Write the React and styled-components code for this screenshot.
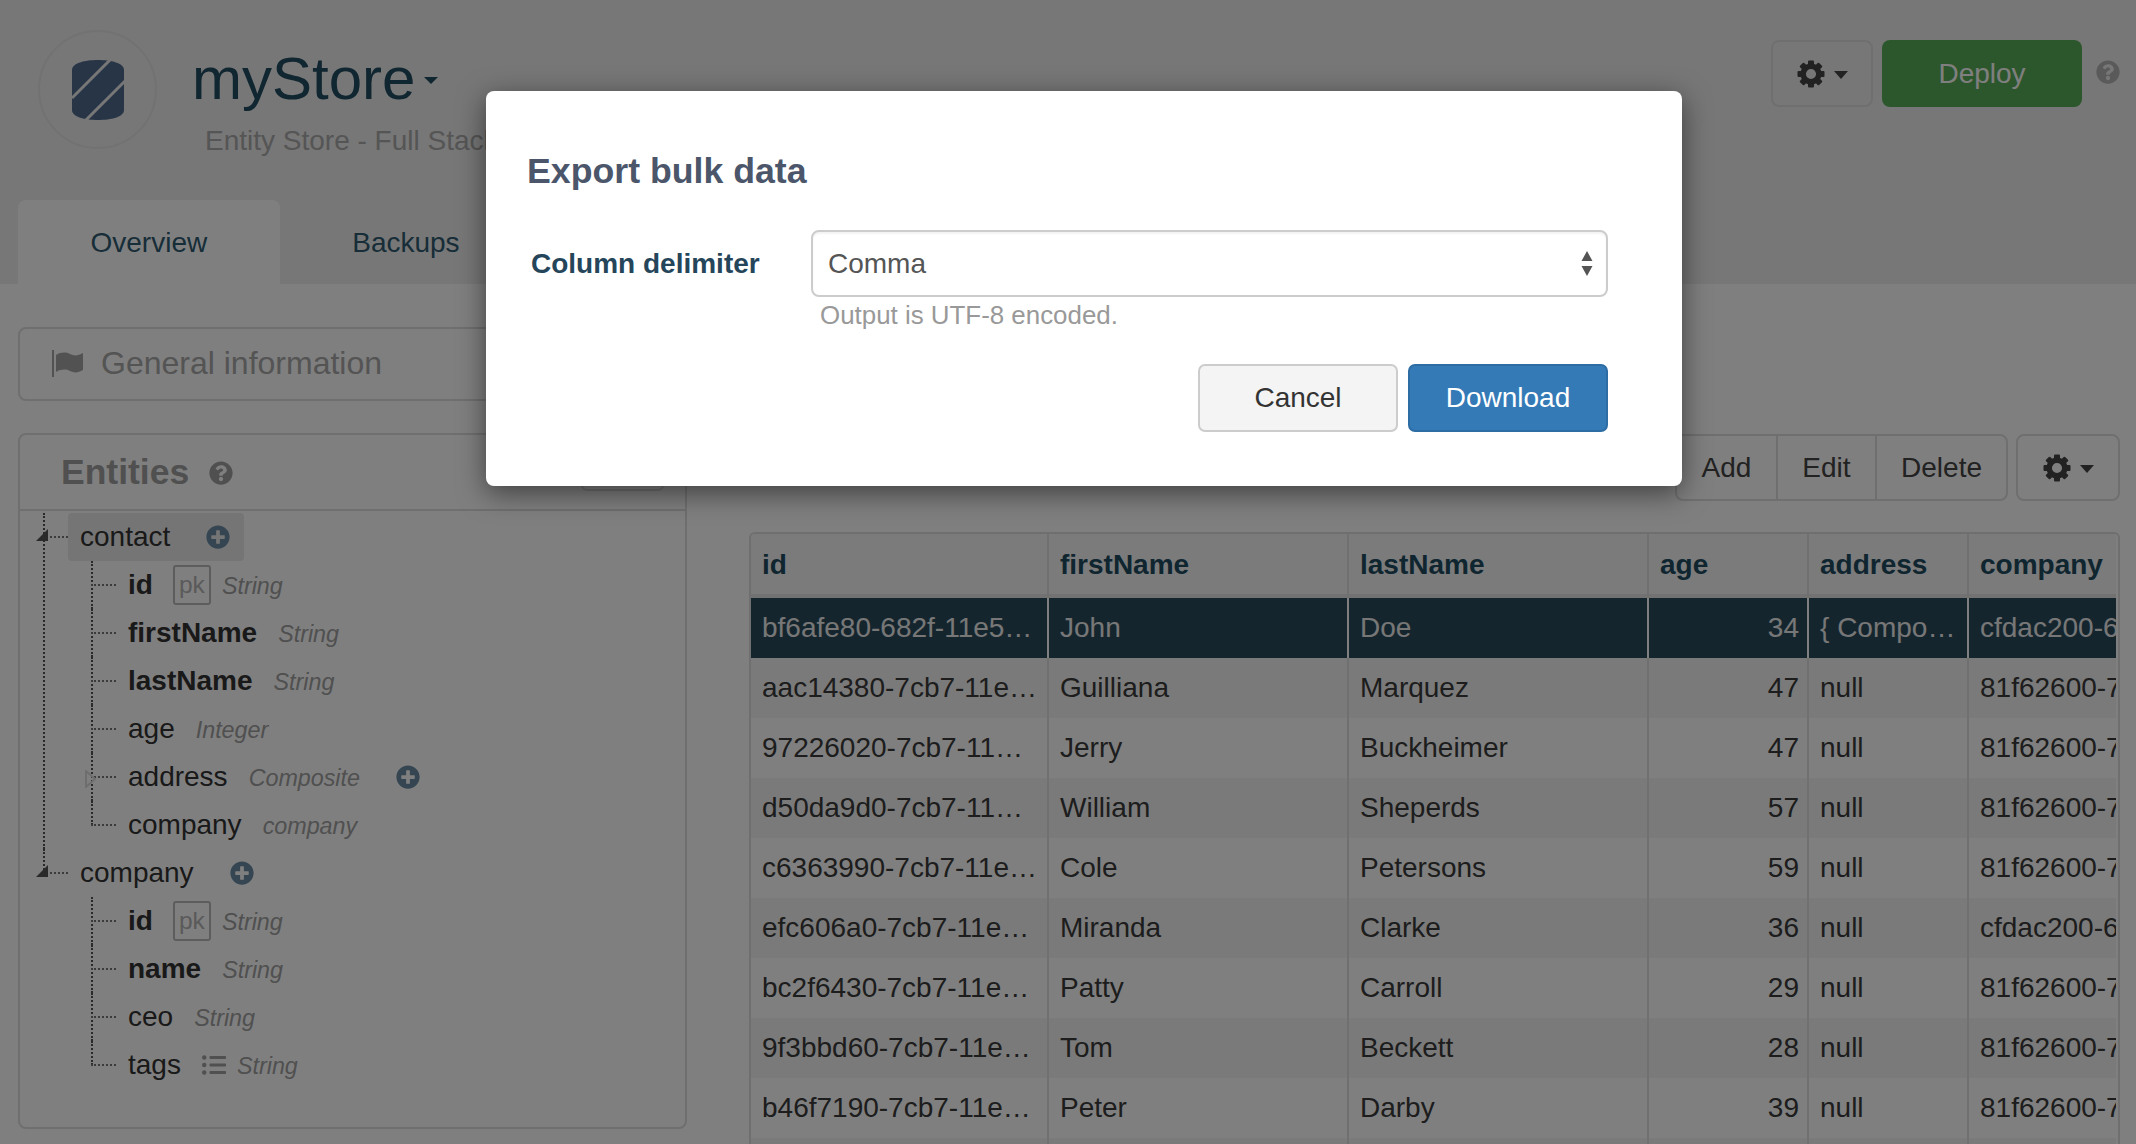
import React from "react";
import styled, { createGlobalStyle } from "styled-components";
import { FaListUl, FaPlusCircle, FaQuestionCircle } from "react-icons/fa";

const Global = createGlobalStyle`
  html, body { margin: 0; padding: 0; background: #fff; }
  body { font-family: "Liberation Sans", Arial, sans-serif; color: #333; }
  * { box-sizing: border-box; }
`;

const Page = styled.div`
  position: relative;
  width: 2136px;
  height: 1144px;
  overflow: hidden;
  background: #fff;
`;
const Header = styled.header`
  height: 284px;
  background: #eee;
  padding: 0 16px 0 18px;
  display: flex;
  flex-direction: column;
`;
const TopRow = styled.div`
  height: 200px;
  display: flex;
  align-items: flex-start;
`;
const LogoCircle = styled.div`
  width: 119px;
  height: 119px;
  margin: 30px 0 0 20px;
  border: 2px solid #e4e4e4;
  border-radius: 50%;
  display: flex;
  align-items: center;
  justify-content: center;
  flex: none;
`;
const TitleBlock = styled.div`
  margin: 49px 0 0 35px;
`;
const TitleLine = styled.div`
  display: flex;
  align-items: center;
`;
const Title = styled.h1`
  margin: 0;
  font-size: 60px;
  line-height: 59px;
  font-weight: 400;
  color: #204c60;
`;
const TitleCaret = styled.span`
  width: 0;
  height: 0;
  margin: 4px 0 0 9px;
  border-left: 7px solid transparent;
  border-right: 7px solid transparent;
  border-top: 7px solid #204c60;
`;
const Subtitle = styled.div`
  margin: 17px 0 0 13px;
  font-size: 28px;
  line-height: 32px;
  color: #aaa;
  white-space: nowrap;
`;
const HeaderActions = styled.div`
  margin: 40px 0 0 auto;
  display: flex;
  align-items: flex-start;
`;
const GearButton = styled.button`
  width: ${(p) => p.$width}px;
  height: 67px;
  border: 2px solid #dedede;
  border-radius: 8px;
  background: transparent;
  display: flex;
  align-items: center;
  justify-content: center;
  gap: 9px;
  padding: 0;
`;
const Caret = styled.span`
  width: 0;
  height: 0;
  margin-top: 2px;
  border-left: 7.5px solid transparent;
  border-right: 7.5px solid transparent;
  border-top: 8px solid #444;
`;
const DeployButton = styled.button`
  width: 200px;
  height: 67px;
  margin-left: 9px;
  border: 0;
  border-radius: 8px;
  background: #58ad58;
  color: #fff;
  font: 400 28px "Liberation Sans", Arial, sans-serif;
`;
const HeaderHelp = styled.span`
  margin: 20px 0 0 14px;
  color: #b4b4b4;
  font-size: 24px;
  line-height: 24px;
  display: flex;
`;
const Tabs = styled.nav`
  display: flex;
  height: 84px;
`;
const Tab = styled.a`
  padding: 2px 72.5px 0;
  display: flex;
  align-items: center;
  font-size: 28px;
  color: #2f5b70;
  background: ${(p) => (p.$active ? "#fff" : "transparent")};
  border-radius: 8px 8px 0 0;
`;

const Main = styled.main`
  display: flex;
  padding-left: 18px;
`;
const LeftColumn = styled.div`
  width: 669px;
  padding-top: 43px;
  flex: none;
`;
const GeneralPanel = styled.div`
  height: 74px;
  border: 2px solid #dedede;
  border-radius: 8px;
  padding: 0 0 2px 31px;
  display: flex;
  align-items: center;
  font-size: 32px;
  color: #a8a8a8;
`;
const Flag = styled.svg`
  margin-right: 18px;
  flex: none;
`;
const EntitiesPanel = styled.section`
  margin-top: 32px;
  height: 696px;
  border: 2px solid #dedede;
  border-radius: 8px;
`;
const EntitiesHeader = styled.div`
  height: 76px;
  border-bottom: 2px solid #dedede;
  display: flex;
  align-items: flex-start;
  padding: 0 21px 0 41px;
`;
const EntitiesTitle = styled.h2`
  margin: 17px 0 0;
  font-size: 35.5px;
  line-height: 40px;
  font-weight: 700;
  color: #a0a0a0;
`;
const EntitiesHelp = styled.span`
  margin: 26px 0 0 20px;
  color: #a0a0a0;
  font-size: 24px;
  line-height: 24px;
  display: flex;
`;
const NewButton = styled.button`
  margin: 8px 0 0 auto;
  width: 83px;
  height: 48px;
  border: 2px solid #dedede;
  border-radius: 6px;
  background: transparent;
`;
const TreeRoot = styled.ul`
  list-style: none;
  margin: 0;
  padding: 2px 0 0;
`;
const TreeList = styled.ul`
  list-style: none;
  margin: 0;
  padding: 0;
`;
const TreeNode = styled.li`
  position: relative;
  margin-left: ${(p) => p.$indent}px;
  padding-left: 25px;
  &::before {
    content: "";
    position: absolute;
    left: 0;
    top: 0;
    height: ${(p) => (p.$last ? "24px" : "100%")};
    border-left: 2px dotted #555;
  }
`;
const Row = styled.div`
  position: relative;
  height: 48px;
  display: flex;
  align-items: center;
  font-size: 28px;
  &::before {
    content: "";
    position: absolute;
    left: -25px;
    top: 23px;
    width: 25px;
    border-top: 2px dotted #777;
  }
`;
const Label = styled.div`
  display: inline-flex;
  align-items: center;
  height: 48px;
  padding: 0 14px 0 12px;
  border-radius: 4px;
  background: ${(p) => (p.$selected ? "#eaeaea" : "transparent")};
`;
const Name = styled.span`
  color: #333;
  font-weight: ${(p) => (p.$bold ? 700 : 400)};
`;
const Pk = styled.span`
  width: 38px;
  height: 40px;
  margin-left: 20px;
  border: 2px solid #bbb;
  border-radius: 3px;
  color: #b4b4b4;
  font-size: 24.5px;
  display: flex;
  align-items: center;
  justify-content: center;
`;
const Type = styled.span`
  margin: 3px 0 0 ${(p) => (p.$tight ? 11 : 21)}px;
  font-size: 23.3px;
  font-style: italic;
  color: #a0a0a0;
`;
const PlusIcon = styled(FaPlusCircle)`
  margin-left: 36px;
  font-size: 24px;
  color: #6a8ca4;
`;
const ListIcon = styled(FaListUl)`
  margin-left: 21px;
  font-size: 24px;
  color: #a0a0a0;
`;
const Toggle = styled.svg`
  position: absolute;
  left: ${(p) => p.$left}px;
  top: ${(p) => p.$top}px;
`;

const RightColumn = styled.div`
  margin-left: 62px;
  width: 1371px;
  padding-top: 150px;
  flex: none;
`;
const Toolbar = styled.div`
  display: flex;
  justify-content: flex-end;
  gap: 8px;
  height: 67px;
`;
const ButtonGroup = styled.div`
  display: flex;
  border: 2px solid #dedede;
  border-radius: 8px;
`;
const GroupButton = styled.button`
  padding: 0 ${(p) => p.$pad}px;
  border: 0;
  border-left: ${(p) => (p.$first ? "0" : "2px solid #dedede")};
  background: transparent;
  color: #444;
  font: 400 28px "Liberation Sans", Arial, sans-serif;
`;
const TableFrame = styled.div`
  margin-top: 31px;
  border: 2px solid #dedede;
  border-bottom: 0;
  padding-right: 2px;
  border-radius: 6px 6px 0 0;
  overflow: hidden;
  height: 700px;
`;
const TableClip = styled.div`
  overflow: hidden;
`;
const Table = styled.table`
  border-collapse: separate;
  border-spacing: 0;
  table-layout: fixed;
  width: 1540px;
  font-size: 28px;
`;
const Th = styled.th`
  height: 64px;
  padding: 3px 9px 1px 11px;
  text-align: left;
  font-weight: 700;
  background: #f6f6f6;
  color: #1f4c60;
  border-right: 2px solid #e0e0e0;
  border-bottom: 4px solid #e4e4e4;
`;
const Td = styled.td`
  height: 60px;
  padding: 0 ${(p) => (p.$num ? 8 : 9)}px 0 11px;
  text-align: ${(p) => (p.$num ? "right" : "left")};
  white-space: nowrap;
  overflow: hidden;
  text-overflow: ${(p) => (p.$clip ? "clip" : "ellipsis")};
  border-right: 2px solid ${(p) => (p.$selected ? "#fff" : "#e0e0e0")};
  color: ${(p) => (p.$selected ? "#eee" : "#3a3a3a")};
  background: ${(p) => (p.$selected ? "#294a5c" : p.$striped ? "#f5f5f5" : "#fff")};
`;

const Backdrop = styled.div`
  position: absolute;
  inset: 0;
  background: rgba(0, 0, 0, 0.5);
`;
const Modal = styled.div`
  position: absolute;
  left: 486px;
  top: 91px;
  width: 1196px;
  height: 395px;
  padding: 62px 74px 0 41px;
  background: #fff;
  border-radius: 8px;
  box-shadow: 0 7px 28px rgba(0, 0, 0, 0.5);
`;
const ModalTitle = styled.h3`
  margin: 0;
  font-size: 35.7px;
  line-height: 36px;
  font-weight: 700;
  color: #4b566b;
`;
const FieldRow = styled.div`
  margin-top: 41px;
  display: flex;
  align-items: center;
`;
const FieldLabel = styled.label`
  width: 284px;
  padding-left: 4px;
  font-size: 28px;
  font-weight: 700;
  color: #25465a;
  white-space: nowrap;
  flex: none;
`;
const SelectBox = styled.div`
  width: 797px;
  height: 67px;
  border: 2.5px solid #ccc;
  border-radius: 8px;
  box-shadow: inset 0 2px 2px rgba(0, 0, 0, 0.05);
  display: flex;
  align-items: center;
  justify-content: space-between;
  padding: 0 12px 0 15px;
  font-size: 28px;
  color: #555;
`;
const HelpText = styled.div`
  margin: 3px 0 0 293px;
  font-size: 25.9px;
  line-height: 30px;
  color: #999;
`;
const ModalActions = styled.div`
  margin-top: 34px;
  display: flex;
  justify-content: flex-end;
  gap: 10px;
`;
const ModalButton = styled.button`
  width: 200px;
  height: 68px;
  border-radius: 7px;
  border: 2.5px solid ${(p) => (p.$primary ? "#2e6da4" : "#ccc")};
  background: ${(p) => (p.$primary ? "#337ab7" : "#f4f4f4")};
  color: ${(p) => (p.$primary ? "#fff" : "#333")};
  font: 400 28px "Liberation Sans", Arial, sans-serif;
`;

const Logo = () => (
  <svg width="52" height="60" viewBox="0 0 52 60">
    <path d="M0 10C0 3 13 0 26 0S52 3 52 10V50C52 57 39 60 26 60S0 57 0 50Z" fill="#506a8c" />
    <path d="M38 0L0 38M54 20L14 60" stroke="#eee" strokeWidth="3" fill="none" />
  </svg>
);
const Gear = () => (
  <svg width="28" height="28" viewBox="0 0 28 28">
    <circle cx="14" cy="14" r="7.8" fill="none" stroke="#444" strokeWidth="5.5" />
    {[0, 45, 90, 135, 180, 225, 270, 315].map((a) => (
      <rect key={a} x="11" y="0.5" width="6" height="6" rx="1" fill="#444" transform={`rotate(${a} 14 14)`} />
    ))}
  </svg>
);
const FlagGlyph = () => (
  <Flag width="32" height="27" viewBox="0 0 32 27">
    <path d="M1 0H3V27H1Z" fill="#a4a4a4" />
    <path d="M5 5C10 2 15 2 19 4S27 6 32 3V20C27 23 23 23 19 21S10 19 5 22Z" fill="#a4a4a4" />
  </Flag>
);
const Expanded = () => (
  <Toggle $left={-32} $top={16} width="12" height="12" viewBox="0 0 12 12">
    <path d="M12 0V12H0Z" fill="#555" />
  </Toggle>
);
const Collapsed = () => (
  <Toggle $left={-31} $top={17} width="11" height="18" viewBox="0 0 11 18">
    <path d="M1 1L10 9L1 17Z" fill="none" stroke="#ddd" strokeWidth="2" />
  </Toggle>
);

const trees = [
  {
    name: "contact",
    selected: true,
    fields: [
      { name: "id", pk: true, bold: true, type: "String" },
      { name: "firstName", bold: true, type: "String" },
      { name: "lastName", bold: true, type: "String" },
      { name: "age", type: "Integer" },
      { name: "address", type: "Composite", plus: true, collapsed: true },
      { name: "company", type: "company" },
    ],
  },
  {
    name: "company",
    fields: [
      { name: "id", pk: true, bold: true, type: "String" },
      { name: "name", bold: true, type: "String" },
      { name: "ceo", type: "String" },
      { name: "tags", list: true, type: "String" },
    ],
  },
];

const columns = [
  ["id", 298],
  ["firstName", 300],
  ["lastName", 300],
  ["age", 160],
  ["address", 160],
  ["company", 322],
];
const A = "81f62600-7cb7-11e5-8546-0800200c9a66";
const C = "cfdac200-682f-11e5-9e3b-0800200c9a66";
const rows = [
  ["bf6afe80-682f-11e5-9e3b-7b7e6e6c5d4f", "John", "Doe", 34, "{ Composite }", C],
  ["aac14380-7cb7-11e5-8546-0800200c9a66", "Guilliana", "Marquez", 47, "null", A],
  ["97226020-7cb7-11e5-8546-0800200c9a66", "Jerry", "Buckheimer", 47, "null", A],
  ["d50da9d0-7cb7-11e5-8546-0800200c9a66", "William", "Sheperds", 57, "null", A],
  ["c6363990-7cb7-11e5-8546-0800200c9a66", "Cole", "Petersons", 59, "null", A],
  ["efc606a0-7cb7-11e5-8546-0800200c9a66", "Miranda", "Clarke", 36, "null", C],
  ["bc2f6430-7cb7-11e5-8546-0800200c9a66", "Patty", "Carroll", 29, "null", A],
  ["9f3bbd60-7cb7-11e5-8546-0800200c9a66", "Tom", "Beckett", 28, "null", A],
  ["b46f7190-7cb7-11e5-8546-0800200c9a66", "Peter", "Darby", 39, "null", A],
  ["", "", "", "", "", ""],
];

export default function App() {
  return (
    <Page>
      <Global />
      <Header>
        <TopRow>
          <LogoCircle>
            <Logo />
          </LogoCircle>
          <TitleBlock>
            <TitleLine>
              <Title>myStore</Title>
              <TitleCaret />
            </TitleLine>
            <Subtitle>Entity Store - Full Stack</Subtitle>
          </TitleBlock>
          <HeaderActions>
            <GearButton $width={102}>
              <Gear />
              <Caret />
            </GearButton>
            <DeployButton>Deploy</DeployButton>
            <HeaderHelp>
              <FaQuestionCircle />
            </HeaderHelp>
          </HeaderActions>
        </TopRow>
        <Tabs>
          <Tab $active>Overview</Tab>
          <Tab>Backups</Tab>
        </Tabs>
      </Header>
      <Main>
        <LeftColumn>
          <GeneralPanel>
            <FlagGlyph />
            General information
          </GeneralPanel>
          <EntitiesPanel>
            <EntitiesHeader>
              <EntitiesTitle>Entities</EntitiesTitle>
              <EntitiesHelp>
                <FaQuestionCircle />
              </EntitiesHelp>
              <NewButton />
            </EntitiesHeader>
            <TreeRoot>
              {trees.map((t, ti) => (
                <TreeNode key={t.name} $indent={23} $last={ti === trees.length - 1}>
                  <Row>
                    <Expanded />
                    <Label $selected={t.selected}>
                      <Name>{t.name}</Name>
                      <PlusIcon />
                    </Label>
                  </Row>
                  <TreeList>
                    {t.fields.map((f, fi) => (
                      <TreeNode key={f.name} $indent={23} $last={fi === t.fields.length - 1}>
                        <Row>
                          {f.collapsed && <Collapsed />}
                          <Label>
                            <Name $bold={f.bold}>{f.name}</Name>
                            {f.pk && <Pk>pk</Pk>}
                            {f.list && <ListIcon />}
                            <Type $tight={f.pk || f.list}>{f.type}</Type>
                            {f.plus && <PlusIcon />}
                          </Label>
                        </Row>
                      </TreeNode>
                    ))}
                  </TreeList>
                </TreeNode>
              ))}
            </TreeRoot>
          </EntitiesPanel>
        </LeftColumn>
        <RightColumn>
          <Toolbar>
            <ButtonGroup>
              <GroupButton $first $pad={24.5}>Add</GroupButton>
              <GroupButton $pad={24.5}>Edit</GroupButton>
              <GroupButton $pad={24}>Delete</GroupButton>
            </ButtonGroup>
            <GearButton $width={104}>
              <Gear />
              <Caret />
            </GearButton>
          </Toolbar>
          <TableFrame>
            <TableClip>
              <Table>
                <colgroup>
                  {columns.map(([n, w]) => (
                    <col key={n} width={w} />
                  ))}
                </colgroup>
                <thead>
                  <tr>
                    {columns.map(([n]) => (
                      <Th key={n}>{n}</Th>
                    ))}
                  </tr>
                </thead>
                <tbody>
                  {rows.map((r, i) => (
                    <tr key={i}>
                      {r.map((v, c) => (
                        <Td
                          key={c}
                          $num={c === 3}
                          $clip={c === 5}
                          $selected={i === 0}
                          $striped={i % 2 === 1}
                        >
                          {v}
                        </Td>
                      ))}
                    </tr>
                  ))}
                </tbody>
              </Table>
            </TableClip>
          </TableFrame>
        </RightColumn>
      </Main>
      <Backdrop />
      <Modal>
        <ModalTitle>Export bulk data</ModalTitle>
        <FieldRow>
          <FieldLabel>Column delimiter</FieldLabel>
          <SelectBox>
            Comma
            <svg width="14" height="25" viewBox="0 0 14 25">
              <path d="M7 0L12.5 10H1.5ZM7 25L12.5 15H1.5Z" fill="#555" />
            </svg>
          </SelectBox>
        </FieldRow>
        <HelpText>Output is UTF-8 encoded.</HelpText>
        <ModalActions>
          <ModalButton>Cancel</ModalButton>
          <ModalButton $primary>Download</ModalButton>
        </ModalActions>
      </Modal>
    </Page>
  );
}
